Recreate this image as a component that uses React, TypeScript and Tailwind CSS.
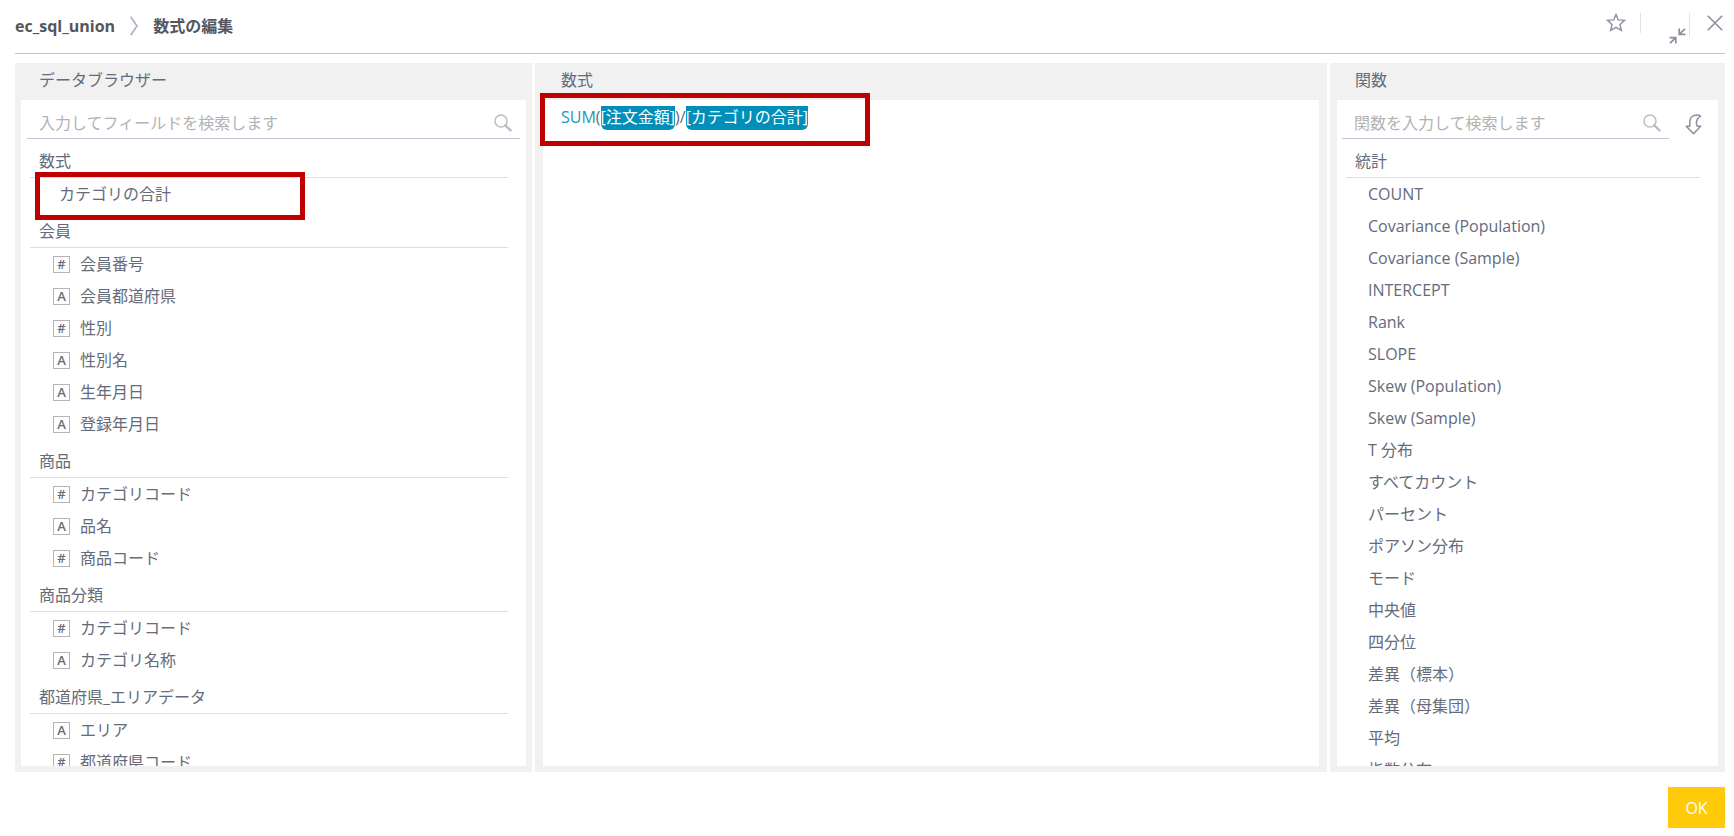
import type { ReactNode } from "react";

type FieldKind = "#" | "A" | null;

interface Group {
  title: string;
  fields: { kind: FieldKind; name: string }[];
  marked?: boolean;
}

const groups: Group[] = [
  { title: "数式", fields: [{ kind: null, name: "カテゴリの合計" }], marked: true },
  {
    title: "会員",
    fields: [
      { kind: "#", name: "会員番号" },
      { kind: "A", name: "会員都道府県" },
      { kind: "#", name: "性別" },
      { kind: "A", name: "性別名" },
      { kind: "A", name: "生年月日" },
      { kind: "A", name: "登録年月日" },
    ],
  },
  {
    title: "商品",
    fields: [
      { kind: "#", name: "カテゴリコード" },
      { kind: "A", name: "品名" },
      { kind: "#", name: "商品コード" },
    ],
  },
  {
    title: "商品分類",
    fields: [
      { kind: "#", name: "カテゴリコード" },
      { kind: "A", name: "カテゴリ名称" },
    ],
  },
  {
    title: "都道府県_エリアデータ",
    fields: [
      { kind: "A", name: "エリア" },
      { kind: "#", name: "都道府県コード" },
    ],
  },
];

const functionNames = [
  "COUNT",
  "Covariance (Population)",
  "Covariance (Sample)",
  "INTERCEPT",
  "Rank",
  "SLOPE",
  "Skew (Population)",
  "Skew (Sample)",
  "T 分布",
  "すべてカウント",
  "パーセント",
  "ポアソン分布",
  "モード",
  "中央値",
  "四分位",
  "差異（標本）",
  "差異（母集団）",
  "平均",
  "指数分布",
];

function SearchIcon() {
  return (
    <svg width="18" height="18" viewBox="0 0 18 18" fill="none" stroke="#bdbdbd" aria-hidden="true">
      <circle cx="7" cy="7" r="6" strokeWidth="1.5" />
      <path d="M11.3 11.3l5.2 5" strokeWidth="2.4" strokeLinecap="round" />
    </svg>
  );
}

function SearchBox({ label, id }: { label: string; id: string }) {
  return (
    <div className="flex h-[39px] min-w-0 flex-1 items-center border-b border-[#c3c5d6] pt-2 pr-2 pl-3">
      <label htmlFor={id} className="sr-only">
        {label}
      </label>
      <input
        id={id}
        type="text"
        placeholder={label}
        className="h-[30px] min-w-0 flex-1 bg-transparent outline-none placeholder:text-[#b3b3b3]"
      />
      <SearchIcon />
    </div>
  );
}

function Panel({ title, className, children }: { title: string; className: string; children: ReactNode }) {
  return (
    <section className={`flex min-h-0 min-w-0 flex-col bg-[#f1f1f1] pb-1.5 ${className}`}>
      <h2 className="h-[37px] shrink-0 pt-[5px] pl-[18px] leading-6">{title}</h2>
      {children}
    </section>
  );
}

function GroupTitle({ children }: { children: ReactNode }) {
  return <h3 className="h-[37px] border-b border-[#dedede] pt-2 pl-[9px] leading-6">{children}</h3>;
}

export default function App() {
  return (
    <div className="flex h-screen min-h-[480px] flex-col bg-white pr-[9px] pb-2 pl-[15px] font-['Open_Sans','Noto_Sans_CJK_JP',sans-serif] text-base text-[#656b7b]">
      <header className="flex h-[54px] shrink-0 items-start justify-between border-b border-[#c4c5c9]">
        <nav aria-label="パンくず" className="flex h-[52px] items-center gap-[15px] font-bold text-[#55565c]">
          <a href="#ec_sql_union">ec_sql_union</a>
          <svg width="8" height="20" viewBox="0 0 8 20" fill="none" stroke="#a9b1bf" strokeWidth="1.6" aria-hidden="true">
            <path d="M0.7 0.7L7 10L0.7 19.3" />
          </svg>
          <h1>数式の編集</h1>
        </nav>
        <div className="flex items-start pt-[13px] text-[#8a8f9b]">
          <button type="button" aria-label="お気に入り" className="pr-3.5">
            <svg width="20" height="19" viewBox="0 0 20 19" fill="none" stroke="currentColor" strokeWidth="1.4">
              <path d="M10 1.6L12.2 6.9L18.6 7.4L14 11.4L15.4 17.3L10 14.3L4.6 17.3L6 11.4L1.4 7.4L7.8 6.9Z" />
            </svg>
          </button>
          <span className="h-5 w-px bg-[#e3e3e6]" />
          <button type="button" aria-label="縮小" className="pt-[15px] pr-[3px] pl-7">
            <svg width="17" height="16" viewBox="0 0 17 16" fill="none" stroke="currentColor" strokeWidth="1.7">
              <path d="M16 0.8L10.4 6.2M10.2 0.6V6.4H16.4" />
              <path d="M1 15.2L6.6 9.8M0.6 9.6H6.8V15.4" />
            </svg>
          </button>
          <span className="h-6 w-px bg-[#e3e3e6]" />
          <button type="button" aria-label="閉じる" className="pt-0.5 pr-0.5 pl-[17px]">
            <svg width="16" height="16" viewBox="0 0 16 16" fill="none" stroke="currentColor" strokeWidth="1.6">
              <path d="M0.8 0.8L15.2 15.2M15.2 0.8L0.8 15.2" />
            </svg>
          </button>
        </div>
      </header>

      <main className="mt-[9px] grid min-h-0 flex-1 grid-cols-[517fr_792fr_395fr] grid-rows-[minmax(0,1fr)] gap-[3px] leading-6">
        <Panel title="データブラウザー" className="px-1.5">
          <div className="min-h-0 flex-1 overflow-hidden bg-white">
            <div className="flex px-1.5">
              <SearchBox id="field-search" label="入力してフィールドを検索します" />
            </div>
            <div className="pt-px pr-[18px] pl-[9px]">
              {groups.map((group) => (
                <div key={group.title} className="pt-px">
                  <GroupTitle>{group.title}</GroupTitle>
                  <ul className="relative">
                    {group.marked && (
                      <li
                        aria-hidden="true"
                        className="pointer-events-none absolute -top-1.5 left-[5px] h-12 w-[270px] border-[5px] border-[#c00000]"
                      />
                    )}
                    {group.fields.map((field) => (
                      <li key={field.name}>
                        <button
                          type="button"
                          className={`flex h-8 w-full items-center gap-2.5 text-left ${field.kind ? "pl-[23px]" : "pl-[29px]"}`}
                        >
                          {field.kind && (
                            <span className="flex size-[17px] items-center justify-center border border-[#b5b5b5] text-[13px] leading-none font-semibold">
                              {field.kind}
                            </span>
                          )}
                          {field.name}
                        </button>
                      </li>
                    ))}
                  </ul>
                </div>
              ))}
            </div>
          </div>
        </Panel>

        <Panel title="数式" className="px-2">
          <div
            role="textbox"
            aria-label="数式"
            aria-multiline="true"
            className="relative min-h-0 flex-1 bg-white pt-1.5 pl-[18px]"
          >
            <div className="pointer-events-none absolute -top-[7px] -left-[3px] h-[53px] w-[330px] border-[5px] border-[#c00000]" />
            <p className="flex h-6 leading-[22px]">
              <span className="text-[#2496b5]">SUM</span>
              <span>(</span>
              <span className="rounded-b-md bg-[#018fba] text-white">[注文金額]</span>
              <span>)/</span>
              <span className="rounded-b-md bg-[#018fba] text-white">[カテゴリの合計]</span>
            </p>
          </div>
        </Panel>

        <Panel title="関数" className="px-[7px]">
          <div className="min-h-0 flex-1 overflow-hidden bg-white">
            <div className="flex items-end pr-4 pl-[5px]">
              <SearchBox id="function-search" label="関数を入力して検索します" />
              <button type="button" aria-label="並べ替え" className="pb-1 pl-4">
                <svg width="17" height="21" viewBox="0 0 17 21" fill="none" stroke="#8a8f9b" strokeWidth="1.5" strokeLinejoin="round">
                  <path d="M15.6 2.2C14.2 0.8 11.6 0.8 9.2 1.4C6 2.4 4.8 5.4 4.8 8.6V12.2H1.2L8.6 19.8L15.6 12.2H12.2C10.8 9.4 11 4.6 15.6 2.2Z" />
                </svg>
              </button>
            </div>
            <div className="pt-0.5 pr-[18px] pl-[9px]">
              <GroupTitle>統計</GroupTitle>
              <ul>
                {functionNames.map((name) => (
                  <li key={name}>
                    <button type="button" className="flex h-8 w-full items-center pl-[22px] text-left">
                      {name}
                    </button>
                  </li>
                ))}
              </ul>
            </div>
          </div>
        </Panel>
      </main>

      <footer className="flex shrink-0 justify-end pt-[15px]">
        <button type="button" className="h-[41px] w-[57px] bg-[#ffca0a] text-white">
          OK
        </button>
      </footer>
    </div>
  );
}
